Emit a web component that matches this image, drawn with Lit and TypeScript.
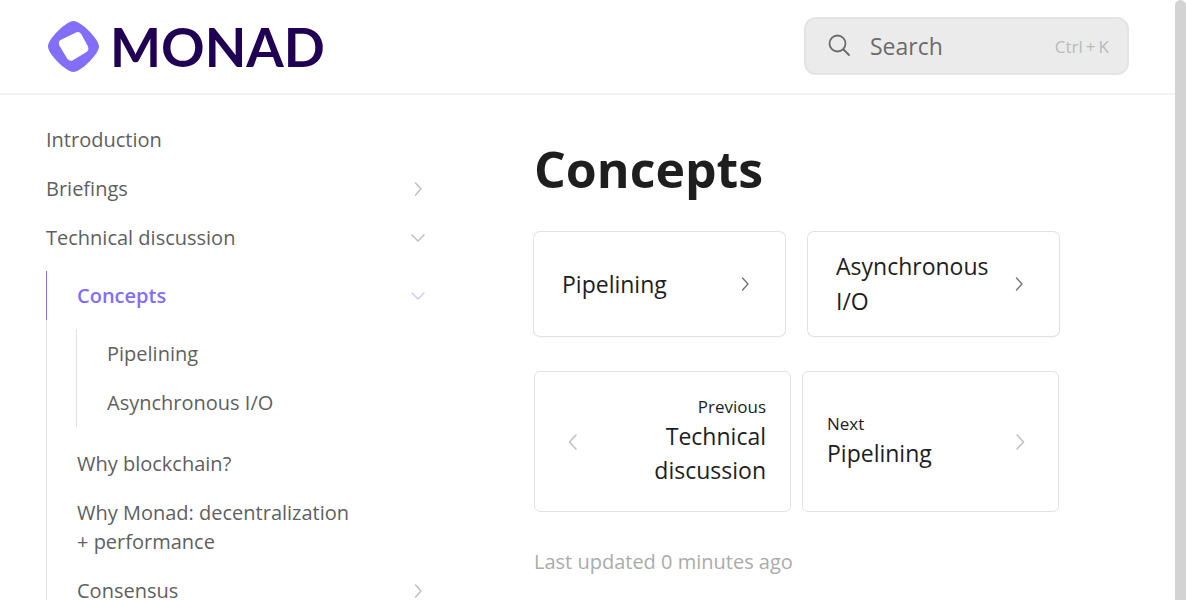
import { LitElement, html, css, svg } from "lit";
import { customElement, property } from "lit/decorators.js";

const chevronPaths: Record<string, string> = {
  right: "M9.5 6 L15 12 L9.5 18",
  left: "M14.5 6 L9 12 L14.5 18",
  down: "M6 9 L12 15 L18 9",
};

@customElement("chevron-icon")
class ChevronIcon extends LitElement {
  @property() direction = "right";

  static styles = css`
    :host { display: block; flex: none; width: 24px; height: 24px; }
    svg { display: block; width: 100%; height: 100%; }
  `;

  render() {
    return html`<svg viewBox="0 0 24 24" fill="none" stroke="currentColor" stroke-width="1.4"
      stroke-linecap="round" stroke-linejoin="round" aria-hidden="true">
      ${svg`<path d=${chevronPaths[this.direction]} />`}
    </svg>`;
  }
}

interface NavItem {
  label: string;
  chevron?: string;
  active?: boolean;
  children?: NavItem[];
}

const navigation: NavItem[] = [
  { label: "Introduction" },
  { label: "Briefings", chevron: "right" },
  {
    label: "Technical discussion",
    chevron: "down",
    children: [
      {
        label: "Concepts",
        chevron: "down",
        active: true,
        children: [{ label: "Pipelining" }, { label: "Asynchronous I/O" }],
      },
      { label: "Why blockchain?" },
      { label: "Why Monad: decentralization + performance" },
      { label: "Consensus", chevron: "right" },
    ],
  },
];

@customElement("app-root")
class AppRoot extends LitElement {
  static styles = css`
    :host {
      display: flex;
      height: 100vh;
      overflow: hidden;
      background: #fff;
      color: #1e1e1e;
      font-family: "Open Sans", "Noto Sans", sans-serif;
    }
    * { box-sizing: border-box; }
    a { color: inherit; text-decoration: none; }
    ul { list-style: none; margin: 0; padding: 0; }

    .page { flex: 1; min-width: 0; height: 100%; overflow: hidden; }
    .scrollbar { flex: none; width: 11px; background: #fff; overflow: hidden; }
    .thumb { height: calc(100% + 12px); border-radius: 6px; background: #d3d3d3; }

    .header {
      display: flex;
      align-items: center;
      justify-content: space-between;
      gap: 24px;
      padding: 17px 46px 18px;
      border-bottom: 2px solid #f3f3f3;
    }
    .brand { display: flex; align-items: center; color: #200052; }
    .brand svg { display: block; width: 290px; height: 58px; overflow: visible; }
    .wordmark { font: 700 54px Lato, sans-serif; fill: #200052; }

    .search {
      display: flex;
      align-items: center;
      width: 325px;
      height: 58px;
      padding: 0 18px 0 22px;
      border: 2px solid #e4e4e4;
      border-radius: 12px;
      background: #ebebeb;
      color: #6b6b6b;
      font: 400 23px "Open Sans", "Noto Sans", sans-serif;
      text-align: left;
    }
    .search svg { flex: none; width: 24px; height: 24px; margin-right: 18px; }
    .search .label { flex: 1; }
    .search .keys { display: flex; gap: 3px; color: #bababa; font-size: 17px; }

    .body { display: flex; align-items: flex-start; }
    .sidebar { flex: none; width: 438px; padding: 20px 8px 0 46px; color: #5f5f5f; }
    .row {
      display: flex;
      align-items: center;
      padding: 10px 0;
      font-size: 20px;
      line-height: 29px;
    }
    .row .label { flex: 1; }
    .row .toggle { display: flex; flex: none; width: 66px; padding-left: 42px; color: #bdbdbd; }
    .sub { margin: 9px 0 12px; }
    .sub .row { padding-left: 30px; border-left: 1px solid #e2e2e2; }
    .nested { border-left: 1px solid #e2e2e2; padding: 9px 0 12px; }
    .nested .sub { margin: 0 0 0 29px; }
    .sub .row.active { border-left-color: #836ef9; color: #836ef9; font-weight: 600; }
    .row.active .toggle { color: #cdc5fd; }

    .main { flex: 1; min-width: 0; padding: 37px 116px 0 96px; }
    h1 { margin: 0; font-size: 50px; line-height: 75px; font-weight: 700; }
    .cards { display: grid; grid-template-columns: 1fr 1fr; gap: 23px; margin-top: 25px; }
    .card {
      display: flex;
      align-items: center;
      gap: 12px;
      min-height: 104px;
      padding: 17px 28px;
      border-radius: 6px;
      box-shadow: 0 0 0 1px #e2e2e2, 0 1px 2px #0000000d;
      font-size: 23px;
      line-height: 35px;
    }
    .card .label { flex: 1; min-width: 0; }
    .card chevron-icon { color: #767676; }

    .pager { display: grid; grid-template-columns: 1fr 1fr; gap: 11px; margin-top: 35px; }
    .step {
      display: flex;
      align-items: center;
      gap: 24px;
      min-height: 141px;
      padding: 18px 24px;
      border: 1px solid #e2e2e2;
      border-radius: 6px;
    }
    .step .text { flex: 1; min-width: 0; padding-bottom: 2px; }
    .step.previous { text-align: right; }
    .step .kind { display: block; font-size: 17px; line-height: 24px; }
    .step .title { display: block; font-size: 23px; line-height: 34px; }
    .step chevron-icon { width: 28px; height: 28px; color: #c2c2c2; }
    .updated { margin: 35px 0 0; color: #ababab; font-size: 20px; line-height: 29px; }
  `;

  private renderItem(item: NavItem, depth: number): unknown {
    return html`<li>
      <a class="row ${item.active ? "active" : ""}" href="#">
        <span class="label">${item.label}</span>
        <span class="toggle">
          ${item.chevron ? html`<chevron-icon direction=${item.chevron}></chevron-icon>` : ""}
        </span>
      </a>
      ${item.children
        ? depth === 0
          ? this.renderList(item.children, depth + 1)
          : html`<div class="nested">${this.renderList(item.children, depth + 1)}</div>`
        : ""}
    </li>`;
  }

  private renderList(items: NavItem[], depth: number): unknown {
    return html`<ul class=${depth ? "sub" : ""}>${items.map((i) => this.renderItem(i, depth))}</ul>`;
  }

  render() {
    return html`
      <div class="page">
        <header class="header">
          <a class="brand" href="#" aria-label="Monad">
            <svg viewBox="0 0 290 58">
              <path fill="#836ef9" fill-rule="evenodd"
                d="M27.500 4C20 4 2 22 2 29.500C2 37 20 55 27.500 55C35 55 53 37 53 29.500C53 22 35 4 27.500 4Z
                   M30.500 15.300Q33.500 14.500 35.200 17L42 29.500Q43.200 33 40.500 35L26.500 43.500Q23.500 44.500 21.500 42L13.300 28.500Q12 25 14.500 23Z" />
              <text class="wordmark" x="64" y="50">MONAD</text>
            </svg>
          </a>
          <button class="search" type="button">
            <svg viewBox="0 0 24 24" fill="none" stroke="currentColor" stroke-width="1.8"
              stroke-linecap="round" aria-hidden="true">
              <circle cx="9.500" cy="9.500" r="8" />
              <path d="M15.500 15.500 L21 21" />
            </svg>
            <span class="label">Search</span>
            <span class="keys"><span>Ctrl</span><span>+</span><span>K</span></span>
          </button>
        </header>
        <div class="body">
          <nav class="sidebar">${this.renderList(navigation, 0)}</nav>
          <main class="main">
            <h1>Concepts</h1>
            <div class="cards">
              ${["Pipelining", "Asynchronous I/O"].map(
                (label) => html`<a class="card" href="#">
                  <span class="label">${label}</span><chevron-icon></chevron-icon>
                </a>`
              )}
            </div>
            <div class="pager">
              <a class="step previous" href="#">
                <chevron-icon direction="left"></chevron-icon>
                <span class="text"><span class="kind">Previous</span><span class="title">Technical discussion</span></span>
              </a>
              <a class="step" href="#">
                <span class="text"><span class="kind">Next</span><span class="title">Pipelining</span></span>
                <chevron-icon></chevron-icon>
              </a>
            </div>
            <p class="updated">Last updated 0 minutes ago</p>
          </main>
        </div>
      </div>
      <div class="scrollbar" aria-hidden="true"><div class="thumb"></div></div>
    `;
  }
}
